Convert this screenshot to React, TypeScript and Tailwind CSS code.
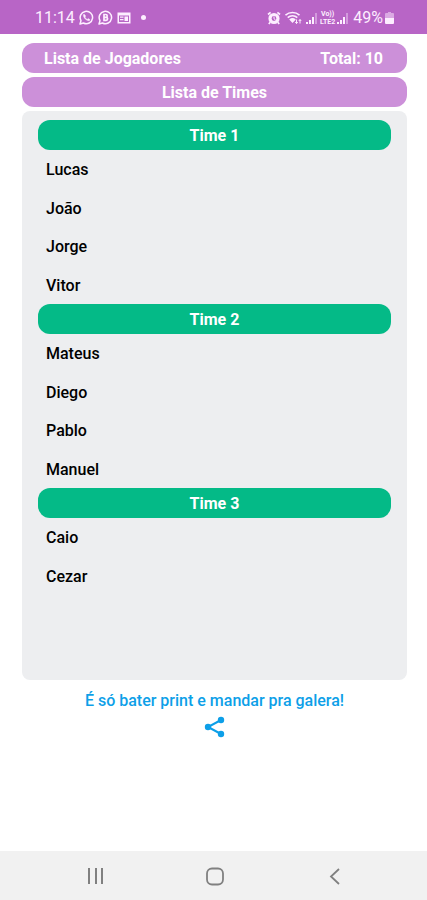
import React from "react";

type Team = { name: string; players: string[] };

const teams: Team[] = [
  { name: "Time 1", players: ["Lucas", "João", "Jorge", "Vitor"] },
  { name: "Time 2", players: ["Mateus", "Diego", "Pablo", "Manuel"] },
  { name: "Time 3", players: ["Caio", "Cezar"] },
];

function WhatsAppIcon() {
  return (
    <svg viewBox="0 0 15 15" className="size-[15px]" fill="none" stroke="currentColor" strokeWidth="1.5">
      <path d="M1 14l1-3.4A6.2 6.2 0 1 1 4.5 13z" strokeLinejoin="round" />
      <path d="M5 4c-1.500 1.300.1 3.900 1.500 5.200 1.500 1.400 3.900 2.200 4.600.6l-1.800-1.300-1.100.9c-1-.4-1.800-1.300-2.200-2.300l.8-1z" fill="currentColor" strokeWidth="0.400" />
    </svg>
  );
}

function BusinessIcon() {
  return (
    <svg viewBox="0 0 15 15" className="size-[15px]" fill="none" stroke="currentColor" strokeWidth="1.5">
      <path d="M1 14l1-3.4A6.2 6.2 0 1 1 4.5 13z" strokeLinejoin="round" />
      <path d="M6 4.500h1.800a1.400 1.400 0 0 1 0 2.800H6zM6 7.300h2.100a1.500 1.500 0 0 1 0 3H6z" strokeWidth="1.700" />
    </svg>
  );
}

function NewsIcon() {
  return (
    <svg viewBox="0 0 14 14" className="size-3.5" fill="currentColor">
      <path fillRule="evenodd" d="M0.500 1.500h13v11h-13zM2 4.500v6.500h10V4.500z" />
      <path d="M3 5.500h3.500v1.300H3zM3 8h3.500v1.300H3zM7.500 5.500h3.500v4.500H7.500z" />
    </svg>
  );
}

function AlarmIcon() {
  return (
    <svg viewBox="0 0 14 14" className="size-3.5" fill="none" stroke="currentColor">
      <circle cx="7" cy="7.500" r="4" strokeWidth="3.200" />
      <path d="M7 5.500v2.300l1.500 1" strokeWidth="1" />
      <path d="M1 3.500L3.600 1.300M13 3.500l-2.600-2.200M3.200 11.200L1.800 13M10.800 11.200l1.400 1.800" strokeWidth="1.700" />
    </svg>
  );
}

function WifiIcon() {
  return (
    <svg viewBox="0 0 17 14" className="h-3.5 w-[17px]" fill="none" stroke="currentColor" strokeWidth="1.600">
      <path d="M0.500 4.200a10.500 10.500 0 0 1 14 0M2.700 6.600a7.200 7.200 0 0 1 9.600 0" />
      <path d="M4.200 8.400a5 5 0 0 1 6.600 0L7.500 12z" fill="currentColor" stroke="none" />
      <path d="M11.500 8.500v4M10.300 11l1.200 1.600 1.200-1.600M15 12.500v-4M13.800 10L15 8.500l1.200 1.500" strokeWidth="1" />
    </svg>
  );
}

function SignalIcon() {
  return (
    <svg viewBox="0 0 12 12" className="size-3" fill="currentColor">
      <path d="M0 10h2v2H0zM3 8h2v4H3zM6 5h2v7H6z" />
      <path d="M9 1h2v11H9z" opacity="0.400" />
    </svg>
  );
}

function BatteryIcon() {
  return (
    <svg viewBox="0 0 9 14" className="h-3.5 w-[9px]" fill="currentColor">
      <path d="M3 1h3v1h2a1 1 0 0 1 1 1v4H0V3a1 1 0 0 1 1-1h2z" opacity="0.500" />
      <path d="M0 7h9v5a1 1 0 0 1-1 1H1a1 1 0 0 1-1-1z" />
    </svg>
  );
}

function StatusBar() {
  return (
    <header className="flex h-[34px] items-center justify-between bg-[#b865c6] pr-[33px] pl-[35px] pt-px text-base text-[#fdeeff]">
      <div className="flex items-center gap-1">
        <span>11:14</span>
        <WhatsAppIcon />
        <BusinessIcon />
        <NewsIcon />
        <span className="ml-1.5 size-[5px] rounded-full bg-current" />
      </div>
      <div className="flex items-center gap-1">
        <AlarmIcon />
        <WifiIcon />
        <div className="flex items-center gap-0.5">
          <SignalIcon />
          <span className="flex flex-col items-center text-[7px] leading-[8px] font-bold">
            <span>Vo))</span>
            <span>LTE2</span>
          </span>
          <SignalIcon />
        </div>
        <div className="flex items-center gap-0.5">
          <span>49%</span>
          <BatteryIcon />
        </div>
      </div>
    </header>
  );
}

function TeamSection({ team }: { team: Team }) {
  return (
    <section>
      <h2 className="h-[30px] rounded-xl bg-[#04ba87] text-center text-base leading-8 font-bold text-white">
        {team.name}
      </h2>
      <ul className="px-2 text-base font-medium text-black">
        {team.players.map((player) => (
          <li key={player} className="flex items-center pt-0.5 odd:h-[38px] even:h-[39px]">
            {player}
          </li>
        ))}
      </ul>
    </section>
  );
}

function NavigationBar() {
  return (
    <nav className="flex h-[49px] items-center justify-between bg-[#f1f1f1] px-[83px] text-[#808080]">
      <button type="button" aria-label="Recentes" className="flex size-6 items-center justify-center">
        <svg viewBox="0 0 24 24" className="size-6" fill="none" stroke="currentColor" strokeWidth="2">
          <path d="M6 4v16M13 4v16M19 4v16" />
        </svg>
      </button>
      <button type="button" aria-label="Início" className="flex size-6 items-center justify-center">
        <svg viewBox="0 0 24 24" className="size-6" fill="none" stroke="currentColor" strokeWidth="1.800">
          <rect x="5" y="4.500" width="16" height="16" rx="5" />
        </svg>
      </button>
      <button type="button" aria-label="Voltar" className="flex size-6 items-center justify-center">
        <svg viewBox="0 0 24 24" className="size-6" fill="none" stroke="currentColor" strokeWidth="1.800">
          <path d="M19 5L11 12.500l8 7.500" />
        </svg>
      </button>
    </nav>
  );
}

export default function App() {
  return (
    <div className="flex min-h-screen flex-col bg-white font-[Roboto,sans-serif]">
      <StatusBar />
      <main className="flex flex-1 flex-col pt-[9px] pr-5 pb-28 pl-[22px]">
        <div className="flex h-[30px] items-center justify-between rounded-xl bg-[#cc90d9] pt-0.5 pr-6 pl-[22px] text-base font-bold text-white">
          <h1>Lista de Jogadores</h1>
          <span>Total: 10</span>
        </div>
        <div className="mt-1 h-[30px] rounded-xl bg-[#cc90d9] text-center text-base leading-8 font-bold text-white">
          Lista de Times
        </div>
        <div className="mt-1 flex-1 rounded-lg bg-[#edeef0] px-4 pt-[9px]">
          {teams.map((team) => (
            <TeamSection key={team.name} team={team} />
          ))}
        </div>
        <footer className="flex flex-col items-center pt-[11px] text-[#0d9fe8]">
          <p className="text-base leading-5 font-medium">É só bater print e mandar pra galera!</p>
          <button type="button" aria-label="Compartilhar" className="mt-1 flex size-6 items-center justify-center">
            <svg viewBox="0 0 24 24" className="size-6" fill="currentColor" stroke="currentColor">
              <path d="M18 5L5 12l13 7" fill="none" strokeWidth="2" />
              <circle cx="18" cy="5" r="3.200" stroke="none" />
              <circle cx="5" cy="12" r="3.200" stroke="none" />
              <circle cx="18" cy="19" r="3.200" stroke="none" />
            </svg>
          </button>
        </footer>
      </main>
      <NavigationBar />
    </div>
  );
}
